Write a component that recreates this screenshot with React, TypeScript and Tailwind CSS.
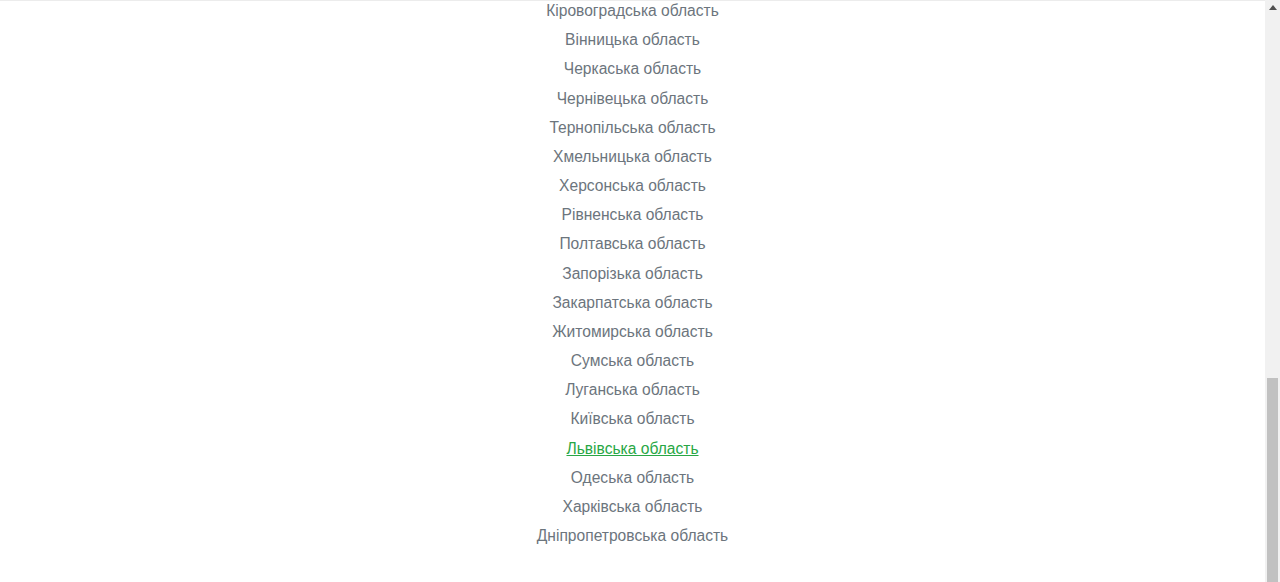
import React from "react";

const regions = [
  "Кіровоградська область",
  "Вінницька область",
  "Черкаська область",
  "Чернівецька область",
  "Тернопільська область",
  "Хмельницька область",
  "Херсонська область",
  "Рівненська область",
  "Полтавська область",
  "Запорізька область",
  "Закарпатська область",
  "Житомирська область",
  "Сумська область",
  "Луганська область",
  "Київська область",
  "Львівська область",
  "Одеська область",
  "Харківська область",
  "Дніпропетровська область",
];

export default function App() {
  return (
    <div
      className="flex h-[582px] w-full overflow-hidden bg-white"
      style={{ fontFamily: '"Liberation Sans", Arial, sans-serif' }}
    >
      <div className="flex-1 border-t border-[#ececec]">
        <ul className="-mt-[5px] flex flex-col items-center">
          {regions.map((r) => (
            <li key={r} className="text-[15.6px] leading-[29.17px]">
              {r === "Львівська область" ? (
                <a href="#" className="text-[#28a745] underline">
                  {r}
                </a>
              ) : (
                <span className="text-[#6c757d]">{r}</span>
              )}
            </li>
          ))}
        </ul>
      </div>
      <div className="flex w-[15px] flex-col bg-[#f1f1f1]">
        <div className="flex h-[15px] items-center justify-center">
          <svg width="8" height="5" viewBox="0 0 8 5">
            <polygon points="4,0 8,5 0,5" fill="#505050" />
          </svg>
        </div>
        <div className="h-[363px]" />
        <div className="mx-[2px] flex-1 bg-[#c1c1c1]" />
      </div>
    </div>
  );
}
